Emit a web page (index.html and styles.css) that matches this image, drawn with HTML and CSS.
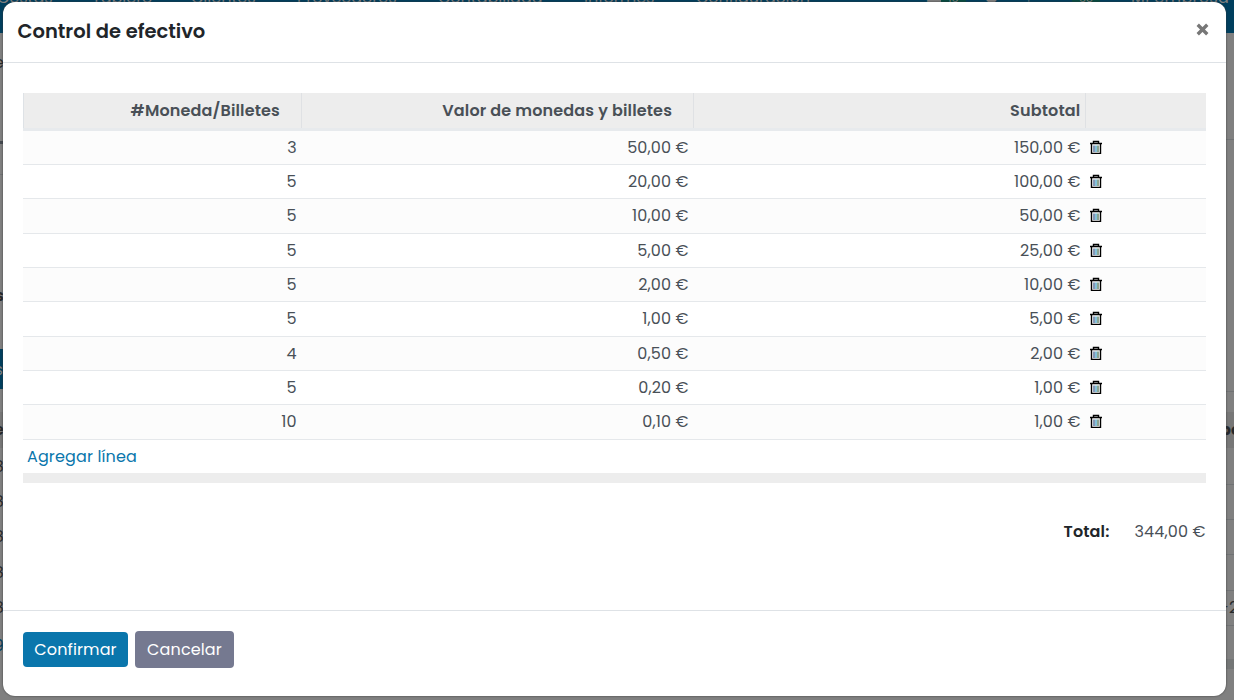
FILE: index.html
```
<!DOCTYPE html>
<html lang="es">
<head>
<meta charset="utf-8">
<title>Control de efectivo</title>
<link rel="stylesheet" href="styles.css">
</head>
<body>
<div class="page" aria-hidden="true">
  <nav class="nav">
    <span class="n0">Cestas</span><span class="n1">Tablero</span><span class="n2">Clientes</span><span class="n3">Proveedores</span><span class="n4">Contabilidad</span><span class="n5">Informes</span><span class="n6">Configuración</span><span class="n7">▬</span><span class="n8">16</span><span class="n9">●</span><span class="n10">⚑</span><span class="n11">68</span><span class="n12">Mi empresa (</span>
  </nav>
  <div class="side left">
    <span class="frag s1">e</span><i class="mark"></i><i class="rule r1"></i><span class="frag s2">s</span><span class="tab">s</span><i class="head"></i><span class="frag s3">e</span>
    <span class="frag e1">8</span><span class="frag e2">8</span><span class="frag e3">8</span><span class="frag e4">8</span><span class="frag e5">8</span><span class="frag link">9</span>
  </div>
  <div class="side right">
    <i class="rule q1"></i><i class="rule q2"></i><i class="head tall"></i><span class="frag dark">po</span>
    <i class="rule q3"></i><i class="rule q4"></i><i class="rule q5"></i><i class="rule q6"></i><span class="frag neg">-2</span><i class="rule q7"></i><i class="foot"></i>
  </div>
</div>
<main class="modal">
  <header class="title"><h1>Control de efectivo</h1>
    <svg class="close" viewBox="0 0 12 12"><path d="M1.6 1.6l8.8 8.8M10.4 1.6l-8.8 8.8"/></svg>
  </header>
  <section class="body">
    <div class="table" id="cash">
      <div class="row thead"><b>#Moneda/Billetes</b><b>Valor de monedas y billetes</b><b class="last">Subtotal</b><b></b></div>
    </div>
    <a class="add">Agregar línea</a>
    <div class="bar"></div>
    <div class="total"><b>Total:</b><span>344,00 €</span></div>
  </section>
  <footer class="actions"><button class="ok">Confirmar</button><button class="cancel">Cancelar</button></footer>
</main>
<script src="app.js"></script>
</body>
</html>
```
FILE: styles.css
```
* { box-sizing: border-box; }
body { margin: 0; width: 1234px; height: 700px; overflow: hidden; background: #808080; color: #495057; font: 16px/24px Poppins, Inter, "Open Sans", sans-serif; letter-spacing: .13px; }
.page { position: absolute; inset: 0; overflow: hidden; color: #26292c; }
.nav { height: 33px; background: #003f5e; color: #808080; position: relative; letter-spacing: 0; }
.nav span { position: absolute; top: -14px; line-height: 24px; white-space: nowrap; }
.nav .n0 { left: -3px; } .n1 { left: 92px; } .n2 { left: 191px; } .n3 { left: 297px; } .n4 { left: 438px; } .n5 { left: 584px; } .n6 { left: 696px; } .n7 { left: 927px; }
.nav .n8, .nav .n11 { background: #064b42; font-size: 11px; padding: 0 7px; } .n8 { left: 941px; } .n9 { left: 984px; } .n10 { left: 1025px; } .n11 { left: 1072px; } .nav .n12 { left: 1131px; letter-spacing: .4px; }
.side { position: absolute; top: 33px; bottom: 0; overflow: hidden; }
.left { left: 0; width: 3px; } .right { left: 1226px; width: 8px; }
.side > * { position: absolute; }
.frag { right: -1px; line-height: 24px; }
.s1 { top: 18px; } .s2 { top: 251px; font-weight: 700; } .s3 { top: 385px; font-weight: 600; }
.e1 { top: 422px; } .e2 { top: 457px; } .e3 { top: 492px; } .e4 { top: 528px; } .e5 { top: 563px; } .link { top: 601px; color: #003f5e; }
.mark { top: 108px; width: 3px; height: 3px; background: #444a50; }
.tab { top: 316px; right: 0; width: 20px; height: 40px; line-height: 42px; text-align: right; color: #808080; background: #003f5e; }
.head { top: 379px; width: 8px; height: 36px; background: #777; }
.rule { width: 8px; height: 1px; background: #707274; }
.r1 { top: 141px; } .q1 { top: 106px; } .q2 { top: 358px; } .q3 { top: 451px; } .q4 { top: 486px; } .q5 { top: 521px; } .q6 { top: 557px; } .q7 { top: 592px; }
.right .dark { right: auto; left: -6px; top: 385px; font-weight: 700; } .right .neg { right: auto; left: -6px; top: 563px; }
.foot { top: 626px; width: 8px; height: 10px; background: #747676; }
.modal { position: absolute; left: 3px; top: 2px; width: 1223px; height: 694px; background: #fff; border-radius: 12px; box-shadow: 0 0 2px #333; display: flex; flex-direction: column; }
.title { height: 61px; padding: 0 17px 0 15px; border-bottom: 1px solid #dee2e6; display: flex; justify-content: space-between; }
h1 { margin: 18px 0 0 -.5px; font-size: 19.5px; line-height: 24px; font-weight: 600; color: #212529; letter-spacing: 0; }
.close { width: 13px; height: 13px; margin-top: 21px; }
.close path { fill: none; stroke: #777; stroke-width: 3.1; }
.body { height: 547px; padding: 30px 20px 0; }
.table { display: grid; grid-template-rows: 37.7px; grid-auto-rows: 34.33px; }
.row { display: grid; grid-template-columns: 279px 392px 392px 120px; border-bottom: 1px solid #e5e8eb; line-height: 34px; text-align: right; }
.row:nth-child(even) { background: #fcfcfc; }
.thead { background: #ededed; border-bottom: 3px solid #e7eaed; letter-spacing: .15px; }
.thead b { border-right: 1px solid #dfe1e4; padding-right: 21px; font-weight: 600; line-height: 35px; }
.thead b:first-child { border-left: 1px solid #dee2e6; }
.thead .last { padding-right: 4.6px; } .thead b:last-child { border-right: 0; }
.num { padding-right: 5.3px; }
.bin { width: 14px; height: 15px; margin: 9px 0 0 3px; display: block; }
.add { display: block; height: 33.33px; padding-left: 4px; color: #0a76ac; line-height: 34px; }
.bar { height: 10px; background: #ededed; }
.total { display: flex; justify-content: flex-end; margin-top: 37px; padding-right: .4px; gap: 25px; }
.total b { color: #212529; font-weight: 600; }
.actions { flex: 1; border-top: 1px solid #dee2e6; padding: 20px; display: flex; align-items: flex-start; gap: 7px; }
button { border: 0; border-radius: 4px; color: #fff; font: inherit; letter-spacing: inherit; padding: 0; text-align: center; }
.ok { width: 105px; height: 35px; margin-top: 1px; background: #0a76ac; }
.cancel { width: 99px; height: 37px; background: #757990; }
```
FILE: app.js
```
const rows = [
  ["3", "50,00 €", "150,00 €"],
  ["5", "20,00 €", "100,00 €"],
  ["5", "10,00 €", "50,00 €"],
  ["5", "5,00 €", "25,00 €"],
  ["5", "2,00 €", "10,00 €"],
  ["5", "1,00 €", "5,00 €"],
  ["4", "0,50 €", "2,00 €"],
  ["5", "0,20 €", "1,00 €"],
  ["10", "0,10 €", "1,00 €"]
];
const bin = '<svg class="bin" viewBox="0 0 14 15" fill="none"><path d="M1 3.5h12M4.5 3V1.5h5V3M2.5 4v9.4h9V4" stroke="#000" stroke-width="1.4"/><path d="M5 5.5v6.5" stroke="#10306c"/><path d="M7 5.5v6.5" stroke="#0a86b8"/><path d="M9 5.5v6.5" stroke="#1a4c24"/></svg>';
document.getElementById("cash").insertAdjacentHTML("beforeend", rows.map(r =>
  '<div class="row">' + r.map(v => `<span class="num">${v}</span>`).join("") + bin + "</div>").join(""));
```
